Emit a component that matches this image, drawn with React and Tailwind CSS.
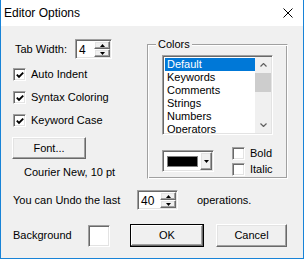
const sunken =
  'border border-[#a0a0a0] border-b-white border-r-white bg-white shadow-[inset_1px_1px_0_#696969,inset_-1px_-1px_0_#e3e3e3]'
const raised =
  'border border-t-white border-l-white border-r-[#696969] border-b-[#696969] bg-[#f0f0f0] shadow-[inset_-1px_-1px_0_#a0a0a0,inset_1px_1px_0_#e3e3e3]'

const Tri = ({ down }) => (
  <svg width="5" height="3" viewBox="0 0 5 3">
    <polygon points={down ? '0,0 5,0 2.5,3' : '2.5,0 5,3 0,3'} fill="#000" />
  </svg>
)

const SpinBox = ({ value, w }) => (
  <div className={`flex h-[20px] p-[1px] ${w} ${sunken}`}>
    <div className="flex-1 pl-[2px] text-[12px] leading-[18px]">{value}</div>
    <div className="flex w-[16px] flex-col">
      <div className={`flex h-[9px] items-center justify-center ${raised}`}>
        <Tri />
      </div>
      <div className={`flex h-[9px] items-center justify-center ${raised}`}>
        <Tri down />
      </div>
    </div>
  </div>
)

const CheckBox = ({ checked, label }) => (
  <div className="flex items-center">
    <div className={`flex h-[13px] w-[13px] items-center justify-center ${sunken}`}>
      {checked && (
        <svg width="8" height="8" viewBox="0 0 8 8">
          <polyline points="0.8,3.6 3,5.8 7.2,1.6" fill="none" stroke="#000" strokeWidth="1.9" />
        </svg>
      )}
    </div>
    <span className="ml-[5px]">{label}</span>
  </div>
)

const colorItems = ['Default', 'Keywords', 'Comments', 'Strings', 'Numbers', 'Operators']

export default function App() {
  return (
    <div className="flex h-[259px] w-[304px] flex-col overflow-hidden border-x border-b border-[#1883d7] bg-[#f0f0f0] font-['Liberation_Sans',Arial,sans-serif] text-black">
      {/* title bar */}
      <div className="flex h-[26px] shrink-0 items-center justify-between bg-white pl-[3px] pr-[10px]">
        <span className="text-[12px]">Editor Options</span>
        <svg width="10" height="10" viewBox="0 0 10 10">
          <path d="M0.5 0.5 L9.5 9.5 M9.5 0.5 L0.5 9.5" stroke="#000" strokeWidth="1" />
        </svg>
      </div>

      <div className="flex flex-col text-[11px] leading-[13px]">
        <div className="flex">
          {/* left column */}
          <div className="flex w-[146px] flex-col pl-[12px]">
            <div className="mt-[13px] flex h-[20px] items-center">
              <span className="w-[62px] pl-[2px]">Tab Width:</span>
              <SpinBox value="4" w="w-[37px]" />
            </div>
            <div className="mt-[4px] flex flex-col">
              <div className="flex h-[23px] items-center">
                <CheckBox checked label="Auto Indent" />
              </div>
              <div className="flex h-[23px] items-center">
                <CheckBox checked label="Syntax Coloring" />
              </div>
              <div className="flex h-[23px] items-center">
                <CheckBox checked label="Keyword Case" />
              </div>
            </div>
            <button className={`ml-[-1px] mt-[5px] flex h-[22px] w-[74px] items-center justify-center ${raised}`}>
              Font...
            </button>
            <div className="mt-[7px] pl-[11px]">Courier New, 10 pt</div>
          </div>

          {/* colors group */}
          <div className="mt-[18px]">
            <div className="relative h-[135px] w-[141px] border border-[#a0a0a0] border-b-white border-r-white shadow-[inset_1px_1px_0_#fff,inset_-1px_-1px_0_#a0a0a0] pl-[14px] pt-[10px]">
              <span className="absolute left-[8px] top-[-7px] bg-[#f0f0f0] px-[2px]">Colors</span>
              <div className={`flex h-[80px] w-[111px] p-[1px] ${sunken}`}>
                <div className="flex flex-1 flex-col overflow-hidden pl-[1px] pt-[1px]">
                  {colorItems.map((item, i) => (
                    <div
                      key={item}
                      className={`h-[13px] shrink-0 pl-[2px] ${i === 0 ? 'bg-[#0078d7] text-white' : ''}`}
                    >
                      {item}
                    </div>
                  ))}
                </div>
                <div className="flex w-[16px] flex-col bg-[#f0f0f0]">
                  <div className="flex h-[16px] items-center justify-center">
                    <svg width="7" height="4" viewBox="0 0 7 4">
                      <polyline points="0.5,3.5 3.5,0.5 6.5,3.5" fill="none" stroke="#606060" strokeWidth="1.2" />
                    </svg>
                  </div>
                  <div className="h-[19px] bg-[#cdcdcd]" />
                  <div className="flex-1" />
                  <div className="flex h-[16px] items-center justify-center">
                    <svg width="7" height="4" viewBox="0 0 7 4">
                      <polyline points="0.5,0.5 3.5,3.5 6.5,0.5" fill="none" stroke="#606060" strokeWidth="1.2" />
                    </svg>
                  </div>
                </div>
              </div>

              <div className="mt-[10px] flex items-center">
                <div className={`flex h-[22px] w-[52px] items-center p-[1px] ${sunken}`}>
                  <div className="flex flex-1 items-center justify-center">
                    <div className="h-[11px] w-[31px] border border-[#808080] bg-black" />
                  </div>
                  <div className={`flex h-[18px] w-[12px] items-center justify-center ${raised}`}>
                    <Tri down />
                  </div>
                </div>
                <div className="ml-[18px] flex flex-col">
                  <div className="flex h-[16px] items-center">
                    <CheckBox label="Bold" />
                  </div>
                  <div className="flex h-[16px] items-center">
                    <CheckBox label="Italic" />
                  </div>
                </div>
              </div>
            </div>
          </div>
        </div>

        {/* undo row */}
        <div className="mt-[11px] flex h-[20px] items-center pl-[12px]">
          <span className="w-[124px]">You can Undo the last</span>
          <SpinBox value="40" w="w-[41px]" />
          <span className="ml-[19px]">operations.</span>
        </div>

        {/* bottom row */}
        <div className="mt-[14px] flex h-[23px] items-center pl-[12px]">
          <span className="w-[75px]">Background</span>
          <div className={`h-[22px] w-[22px] ${sunken}`} />
          <button className={`ml-[20px] flex h-[23px] w-[74px] items-center justify-center border-black shadow-[inset_-1px_-1px_0_#696969,inset_1px_1px_0_#fff,inset_-2px_-2px_0_#a0a0a0] border bg-[#f0f0f0]`}>
            OK
          </button>
          <button className={`ml-[12px] flex h-[23px] w-[71px] items-center justify-center ${raised}`}>
            Cancel
          </button>
        </div>
      </div>
    </div>
  )
}
